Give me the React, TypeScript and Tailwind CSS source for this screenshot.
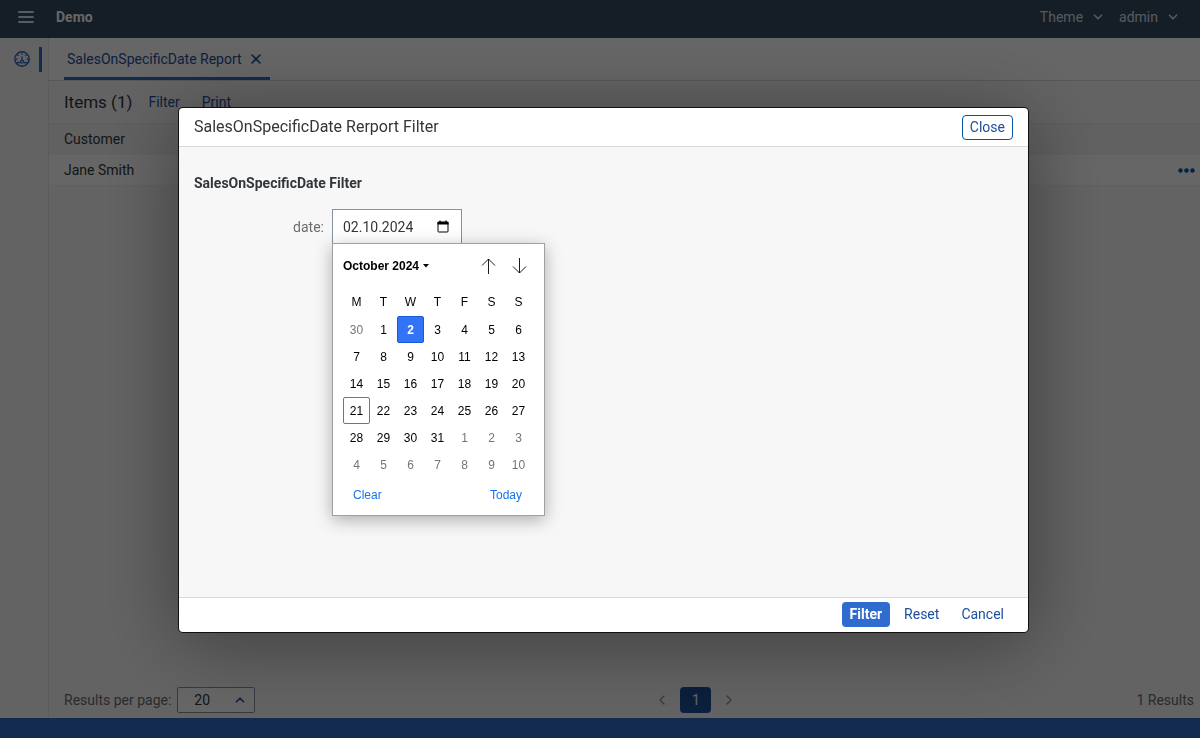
import { useState } from "react";
import { ChevronDown, ChevronLeft, ChevronRight, ChevronUp, X } from "lucide-react";

const weekDays = ["M", "T", "W", "T", "F", "S", "S"];

const weeks = [
  [30, 1, 2, 3, 4, 5, 6],
  [7, 8, 9, 10, 11, 12, 13],
  [14, 15, 16, 17, 18, 19, 20],
  [21, 22, 23, 24, 25, 26, 27],
  [28, 29, 30, 31, 1, 2, 3],
  [4, 5, 6, 7, 8, 9, 10],
];

const dayClass = (week: number, day: number) => {
  const outside = (week === 0 && day > 20) || (week > 3 && day < 20);
  if (outside) return "border-transparent text-[#757575]";
  if (day === 2) return "border-[#1a5ad7] bg-[#3374f6] font-bold text-white";
  if (day === 21) return "border-[#757575] text-black";
  return "border-transparent text-black";
};

const MenuIcon = () => (
  <svg viewBox="0 0 16 14" className="h-3.5 w-4" fill="none" stroke="currentColor" strokeWidth="1.8" strokeLinecap="round">
    <path d="M1 2h14M1 7h14M1 12h14" />
  </svg>
);

const GaugeIcon = () => (
  <svg viewBox="0 0 16 16" className="size-4" fill="none" stroke="currentColor" strokeWidth="1.5">
    <circle cx="8" cy="8" r="7.2" />
    <path d="M8 1.5v2.2M3.6 3.6l1.2 1.2M12.4 3.6l-1.2 1.2M1.5 8.2h2M14.5 8.2h-2M8 5.2v4" strokeWidth="1.2" />
    <path d="M2.6 12.2c1.2-.9 2.3-.9 3.6-.4M13.4 12.2c-1.2-.9-2.3-.9-3.6-.4" strokeWidth="1.3" />
    <circle cx="8" cy="10.6" r="1.5" strokeWidth="1.3" />
  </svg>
);

const CalendarIcon = () => (
  <svg viewBox="0 0 12 13" className="h-[13px] w-3" fill="none" stroke="currentColor">
    <rect x="1" y="2" width="10" height="10" rx="0.8" strokeWidth="1" />
    <path d="M0.5 3.2h11" strokeWidth="2.6" />
    <path d="M3 0.5v2M9 0.5v2" strokeWidth="1.2" />
  </svg>
);

const ShellBar = () => (
  <header className="flex h-[38px] shrink-0 items-center bg-[#354a5f] pr-5 pb-1 pl-[18px] text-sm">
    <button aria-label="Menu" className="text-[#d1e8ff]">
      <MenuIcon />
    </button>
    <span className="ml-[22px] flex-1 font-bold text-white">Demo</span>
    <button className="mr-3.5 flex items-center gap-2 text-[#d1e0ee]">
      Theme <ChevronDown className="size-3.5" strokeWidth={3} />
    </button>
    <button className="flex items-center gap-2 text-[#d1e0ee]">
      admin <ChevronDown className="size-3.5" strokeWidth={3} />
    </button>
  </header>
);

const DatePopup = () => (
  <div className="absolute top-full -left-px w-[213px] border border-[#a0a0a0] bg-white px-2.5 pt-2 pb-2.5 font-['Liberation_Sans',sans-serif] text-xs text-black shadow-[0_4px_16px_rgba(0,0,0,0.3)]">
    <div className="flex h-7 items-center">
      <button className="flex flex-1 items-center gap-1 font-bold">
        October 2024
        <svg viewBox="0 0 6 4" className="h-1 w-1.5">
          <path d="M0 0h6L3 3.6z" fill="currentColor" />
        </svg>
      </button>
      <button aria-label="Previous month" className="mr-4">
        <svg viewBox="0 0 15 16" className="h-4 w-[15px]" fill="none" stroke="currentColor" strokeWidth="0.9">
          <path d="M7.5 16V1M1 7.5L7.5 1L14 7.5" />
        </svg>
      </button>
      <button aria-label="Next month" className="mr-[7px]">
        <svg viewBox="0 0 15 16" className="h-4 w-[15px]" fill="none" stroke="currentColor" strokeWidth="0.9">
          <path d="M7.5 0v15M1 8.5L7.5 15L14 8.5" />
        </svg>
      </button>
    </div>
    <table className="mt-2 w-[189px] table-fixed border-collapse text-center">
      <thead>
        <tr className="h-7">
          {weekDays.map((day, i) => (
            <th key={i} className="p-0 font-normal">{day}</th>
          ))}
        </tr>
      </thead>
      <tbody>
        {weeks.map((days, week) => (
          <tr key={week}>
            {days.map((day) => (
              <td key={day} className="p-0">
                <button className={`block size-[27px] rounded-xs border ${dayClass(week, day)}`}>{day}</button>
              </td>
            ))}
          </tr>
        ))}
      </tbody>
    </table>
    <div className="mt-[7px] flex justify-between pr-3 pl-2.5 leading-5 text-[#1a73e8]">
      <button>Clear</button>
      <button>Today</button>
    </div>
  </div>
);

const FilterDialog = () => {
  const [date, setDate] = useState("02.10.2024");

  return (
    <div className="fixed inset-0 flex items-center justify-center bg-black/60 pt-0.5 pl-[7px]">
      <div
        role="dialog"
        aria-labelledby="dialog-title"
        className="flex w-[849px] max-w-full flex-col rounded-sm bg-white shadow-[0_0_0_1px_rgba(0,0,0,0.8),0_10px_80px_rgba(0,0,0,0.4)]"
      >
        <div className="flex h-[39px] items-center justify-between border-b border-[#d9d9d9] px-[15px]">
          <h2 id="dialog-title" className="text-base text-[#32363a]">SalesOnSpecificDate Rerport Filter</h2>
          <button className="h-[25px] rounded-sm border border-[#0854a0] px-[7px] text-sm text-[#1c4f9c]">Close</button>
        </div>
        <div className="min-h-[450px] bg-[#f7f7f7] px-[15px] pt-[26px]">
          <h3 className="text-sm leading-5 font-bold text-[#32363a]">SalesOnSpecificDate Filter</h3>
          <div className="mt-4 flex items-center">
            <label htmlFor="date" className="w-[130px] text-right text-sm text-[#6a6d70]">date:</label>
            <div className="relative ml-2 flex h-[35px] w-[130px] items-center border border-[#89919a] bg-white pr-3 pl-2.5">
              <input
                id="date"
                value={date}
                onChange={(e) => setDate(e.target.value)}
                className="w-full min-w-0 text-sm text-[#32363a] outline-none"
              />
              <button aria-label="Show date picker" className="text-black">
                <CalendarIcon />
              </button>
              <DatePopup />
            </div>
          </div>
        </div>
        <div className="flex h-[35px] items-center justify-end gap-1.5 border-t border-[#d9d9d9] px-4 pb-0.5 text-sm">
          <button className="h-[25px] rounded-sm bg-[#306ccd] px-2 font-bold text-white">Filter</button>
          <button className="h-[25px] px-2 text-[#1c4f9c]">Reset</button>
          <button className="h-[25px] px-2 text-[#1c4f9c]">Cancel</button>
        </div>
      </div>
    </div>
  );
};

const App = () => {
  return (
    <div className="flex min-h-screen flex-col bg-[#f7f7f7] font-[Roboto,sans-serif] text-sm text-[#32363a]">
      <ShellBar />
      <div className="flex flex-1">
        <nav className="flex w-[49px] shrink-0 items-start justify-between border-r border-[#e5e5e5] pt-[9px] pr-1.5 pl-3.5">
          <a href="#dashboard" aria-label="Dashboard" className="pt-1 text-[#326bc8]">
            <GaugeIcon />
          </a>
          <span className="h-[25px] w-[3px] bg-[#326bc8]" />
        </nav>
        <main className="flex min-w-0 flex-1 flex-col">
          <div className="flex h-[43px] border-b border-[#d9d9d9] bg-white pl-[15px]">
            <div className="flex items-center gap-1.5 border-b-3 border-[#326bc8] px-[3px] pt-0.5 text-[#1c4f9c]">
              <a href="#report">SalesOnSpecificDate Report</a>
              <button aria-label="Close tab" className="pr-[3px]">
                <X className="size-4" strokeWidth={2.4} />
              </button>
            </div>
          </div>
          <div className="flex h-[42px] items-center px-[15px]">
            <h1 className="text-[17px]">Items (1)</h1>
            <button className="ml-4 text-[#1c4f9c]">Filter</button>
            <button className="ml-[22px] text-[#1c4f9c]">Print</button>
          </div>
          <table className="w-full text-left">
            <thead>
              <tr className="h-[31px] border-t border-[#e5e5e5] bg-[#f2f2f2]">
                <th className="p-0 pl-[15px] font-normal">Customer</th>
                <th className="w-10 p-0" />
              </tr>
            </thead>
            <tbody>
              <tr className="h-[31px] border-y border-[#f2f2f2] bg-white">
                <td className="p-0 pl-[15px]">Jane Smith</td>
                <td className="p-0 pr-[5px]">
                  <button aria-label="Row actions" className="ml-auto block text-[#0854a0]">
                    <svg viewBox="0 0 17 5" className="h-[5px] w-[17px]" fill="currentColor">
                      <circle cx="2.5" cy="2.5" r="2.2" />
                      <circle cx="8.5" cy="2.5" r="2.2" />
                      <circle cx="14.5" cy="2.5" r="2.2" />
                    </svg>
                  </button>
                </td>
              </tr>
            </tbody>
          </table>
          <div className="mt-auto flex items-center justify-between pr-1.5 pb-[5px] pl-[15px] text-[#6a6d70]">
            <div className="flex items-center gap-1.5">
              <label htmlFor="page-size">Results per page:</label>
              <div className="relative text-[#32363a]">
                <select id="page-size" className="h-[26px] w-[78px] appearance-none rounded-xs border border-[#89919a] bg-white pl-4">
                  <option>20</option>
                </select>
                <ChevronUp className="pointer-events-none absolute top-1.5 right-2 size-3.5 text-[#1c4f9c]" strokeWidth={3} />
              </div>
            </div>
            <div className="flex items-center gap-2.5">
              <button aria-label="Previous page" className="text-[#8a8fa8]">
                <ChevronLeft className="size-4" />
              </button>
              <button className="h-[26px] w-[31px] rounded-sm bg-[#1c4f9c] text-white">1</button>
              <button aria-label="Next page" className="text-[#8a8fa8]">
                <ChevronRight className="size-4" />
              </button>
            </div>
            <span className="text-right">1 Results</span>
          </div>
        </main>
      </div>
      <footer className="h-5 bg-[#326bc8]" />
      <FilterDialog />
    </div>
  );
};

export default App;
